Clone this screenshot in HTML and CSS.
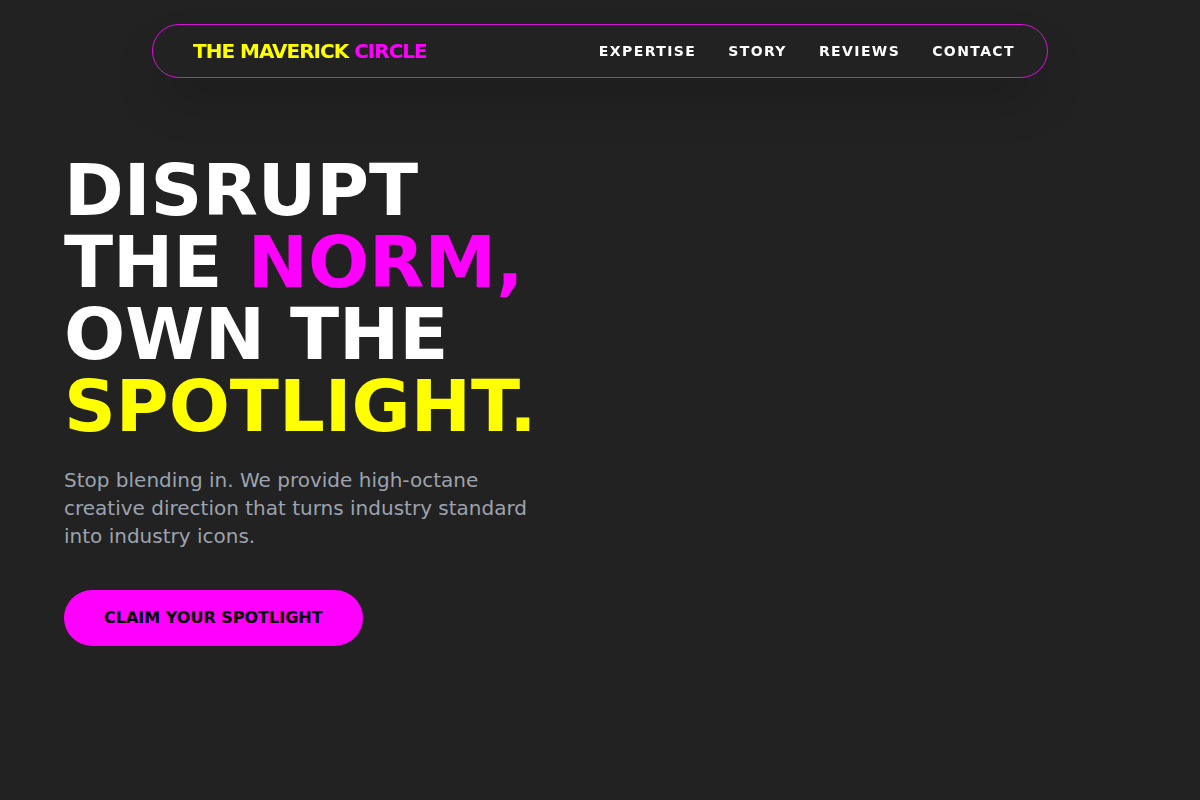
FILE: index.html
```
<!DOCTYPE html>
<html lang="en">

<head>
    <meta charset="UTF-8">
    <meta name="viewport" content="width=device-width, initial-scale=1.0">
    <title>The Maverick Circle</title>
    <link rel="stylesheet" href="styles.css">
</head>

<body>
    <nav class="navbar">
        <a href="#" class="logo">THE MAVERICK <span class="magenta">CIRCLE</span></a>
        <div class="nav-links">
            <a href="#expertise">Expertise</a>
            <a href="#story">Story</a>
            <a href="#reviews">Reviews</a>
            <a href="#contact">Contact</a>
        </div>
    </nav>

    <section class="hero">
        <div class="hero-content">
            <h1>DISRUPT<br>THE <span class="magenta">NORM,</span><br>OWN THE<br><span class="yellow">SPOTLIGHT.</span></h1>
            <p>Stop blending in. We provide high-octane creative direction that turns industry standard into industry icons.</p>
            <button type="button" class="cta">CLAIM YOUR SPOTLIGHT</button>
        </div>
    </section>
</body>

</html>
```

FILE: styles.css
```
* {
    box-sizing: border-box;
    margin: 0;
    padding: 0;
}

body {
    background-color: #222;
    color: #fff;
    font-family: "DejaVu Sans", sans-serif;
}

.magenta {
    color: #f0f;
}

.yellow {
    color: #ff0;
}

/* floating pill navigation */
.navbar {
    position: fixed;
    top: 24px;
    left: 0;
    right: 0;
    width: 92%;
    max-width: 896px;
    margin: 0 auto;
    padding: 12px 32px 12px 40px;
    display: flex;
    justify-content: space-between;
    align-items: center;
    border: 1px solid #d810d8;
    border-radius: 999px;
    background-color: #222;
    box-shadow: 0 25px 50px -12px rgba(0, 0, 0, 0.25);
}

.logo {
    color: #ff0;
    font-size: 20px;
    font-weight: 700;
    line-height: 28px;
    letter-spacing: -0.05em;
    text-decoration: none;
}

.nav-links {
    display: flex;
    gap: 32px;
}

.nav-links a {
    color: #fff;
    font-size: 14px;
    font-weight: 700;
    line-height: 20px;
    letter-spacing: 0.1em;
    text-transform: uppercase;
    text-decoration: none;
}

.hero {
    min-height: 100vh;
    padding: 0 64px;
    display: flex;
    align-items: center;
}

.hero-content {
    max-width: 512px;
}

h1 {
    margin-bottom: 24px;
    font-size: 72px;
    font-weight: 700;
    line-height: 72px;
    white-space: nowrap;
}

.hero p {
    max-width: 480px;
    margin-bottom: 40px;
    color: #9ca3af;
    font-size: 20px;
    line-height: 28px;
}

.cta {
    padding: 16px 40px;
    border: none;
    border-radius: 999px;
    background-color: #f0f;
    color: #000;
    font-family: inherit;
    font-size: 16px;
    font-weight: 700;
    line-height: 24px;
    cursor: pointer;
}
```
